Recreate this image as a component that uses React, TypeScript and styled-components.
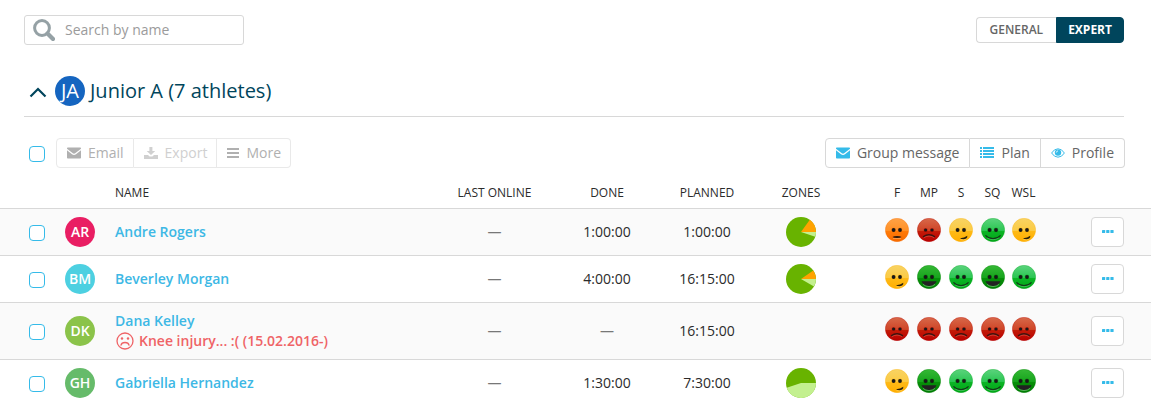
import React from "react";
import styled, { createGlobalStyle, css } from "styled-components";

const color = {
  line: "#d8d8d8",
  accent: "#35bbe9",
  link: "#3db8e5",
  navy: "#00455c",
  text: "#2b2b2b",
  muted: "#666666",
  danger: "#ef6366",
};

const GlobalStyle = createGlobalStyle`
  *, *::before, *::after { box-sizing: border-box; }
  body {
    margin: 0;
    background: #fff;
    color: ${color.text};
    font: 14px/20px "Open Sans", "Noto Sans", sans-serif;
  }
  button, input { font: inherit; color: inherit; margin: 0; }
  svg { display: block; flex: none; }
`;

const Header = styled.header`
  display: flex;
  justify-content: space-between;
  align-items: center;
  padding: 15px 27px 0 24px;
`;

const SearchBox = styled.label`
  display: flex;
  align-items: center;
  gap: 10px;
  width: 220px;
  height: 30px;
  padding: 0 8px;
  border: 1px solid ${color.line};
  border-radius: 3px;
`;

const SearchInput = styled.input`
  flex: 1;
  min-width: 0;
  padding: 0;
  border: 0;
  outline: 0;
  background: none;
  &::placeholder { color: #9b9b9b; opacity: 1; }
`;

const Segments = styled.div`
  display: flex;
`;

const Segment = styled.button<{ $active?: boolean }>`
  height: 26px;
  padding: 0 13px;
  border: 1px solid ${color.line};
  border-radius: 4px 0 0 4px;
  border-right: 0;
  background: #fff;
  color: ${color.muted};
  font-size: 12px;
  font-weight: 600;
  line-height: 16px;
  ${(p) =>
    p.$active &&
    css`
      padding: 0 11px;
      border: 1px solid ${color.navy};
      border-radius: 0 4px 4px 0;
      background: ${color.navy};
      color: #fff;
      font-weight: 700;
    `}
`;

const GroupHeading = styled.div`
  display: flex;
  align-items: center;
  margin: 31px 27px 0 24px;
  padding: 0 0 10px 5px;
  border-bottom: 1px solid ${color.line};
`;

const CollapseButton = styled.button`
  display: flex;
  padding: 2px 0 0;
  border: 0;
  background: none;
  margin-right: 8px;
`;

const Title = styled.h1`
  margin: 0 0 0 5px;
  color: ${color.navy};
  font-size: 20px;
  font-weight: 400;
  line-height: 28px;
`;

const Avatar = styled.span<{ $bg: string; $large?: boolean }>`
  display: flex;
  align-items: center;
  justify-content: center;
  width: 30px;
  height: 30px;
  overflow: hidden;
  border-radius: 50%;
  background: ${(p) => p.$bg};
  color: #fff;
  font-size: ${(p) => (p.$large ? 20 : 14)}px;
  font-weight: ${(p) => (p.$large ? 400 : 600)};
`;

const Toolbar = styled.div`
  display: flex;
  align-items: center;
  padding: 21px 26px 0 29px;
`;

const Checkbox = styled.input.attrs({ type: "checkbox" })`
  display: block;
  appearance: none;
  flex: none;
  width: 16px;
  height: 16px;
  margin-top: 2px;
  border: 1px solid ${color.accent};
  border-radius: 4px;
  background: #fff;
  &:checked { background: ${color.accent}; }
`;

const ToolButton = styled.button<{ $faint?: boolean }>`
  display: flex;
  align-items: center;
  gap: 7px;
  height: 30px;
  padding: 0 10px;
  border: 1px solid var(--edge);
  background: #fff;
  & + & { border-left: 0; }
  &:first-child { border-radius: 4px 0 0 4px; }
  &:last-child { border-radius: 0 4px 4px 0; }
  &:disabled { padding-right: 9px; }
  ${(p) => p.$faint && css`color: #d0d0d0;`}
`;

const ButtonGroup = styled.div<{ $disabled?: boolean }>`
  display: flex;
  color: ${(p) => (p.$disabled ? "#b0b0b0" : color.muted)};
  --edge: ${(p) => (p.$disabled ? "#e9e9e9" : color.line)};
  margin-left: ${(p) => (p.$disabled ? "11px" : "auto")};
`;

const Table = styled.table`
  width: 100%;
  table-layout: fixed;
  border-collapse: separate;
  border-spacing: 0;
`;

const HeadCell = styled.th<{ $w?: number; $left?: boolean; $indent?: boolean }>`
  width: ${(p) => (p.$w ? p.$w + "px" : "auto")};
  height: 41px;
  padding: 15px 0 5px;
  border-bottom: 1px solid ${color.line};
  font-size: 12px;
  font-weight: 400;
  text-align: center;
  white-space: nowrap;
  ${(p) => p.$left && css`padding-left: 15px; text-align: left;`}
  ${(p) => p.$indent && css`padding-left: 26px;`}
`;

const Row = styled.tr`
  &:nth-child(odd) { background: #fafafa; }
`;

const Cell = styled.td<{ $left?: number; $center?: boolean }>`
  padding: 8px 0 8px ${(p) => p.$left ?? 0}px;
  border-bottom: 1px solid ${color.line};
  vertical-align: middle;
  ${(p) => p.$center && css`text-align: center;`}
  svg { margin: 0 auto; }
  ${Row}:last-child & { padding-bottom: 7px; border-bottom: 0; }
`;

const MoodCell = styled(Cell)`
  svg { margin-bottom: 4px; }
`;

const ActionCell = styled(Cell)`
  padding-right: 27px;
  button { margin-left: auto; }
`;

const Dash = styled.span`
  color: #777;
`;

const NameLink = styled.a`
  color: ${color.link};
  font-weight: 600;
  text-decoration: none;
`;

const Note = styled.div`
  display: flex;
  align-items: center;
  gap: 5px;
  color: ${color.danger};
  font-weight: 600;
  svg { margin: 0 0 0 1px; }
`;

const MoreButton = styled.button`
  display: flex;
  align-items: center;
  justify-content: center;
  width: 33px;
  height: 30px;
  padding: 0 0 2px;
  border: 1px solid ${color.line};
  border-radius: 4px;
  background: #fff;
`;

const SearchIcon = () => (
  <svg width="22" height="22" viewBox="0 0 22 22" fill="none" stroke="#95a1a5" aria-hidden="true">
    <circle cx="9" cy="9" r="7.4" strokeWidth="3" />
    <path d="M14.5 14.5 20 20" strokeWidth="4.2" strokeLinecap="round" />
  </svg>
);

const ChevronIcon = () => (
  <svg width="18" height="12" viewBox="0 0 18 12" fill="none" stroke={color.navy} strokeWidth="2.2" aria-hidden="true">
    <path d="M1.5 10.5 9 3l7.5 7.5" />
  </svg>
);

const MailIcon = ({ fill = "currentColor" }: { fill?: string }) => (
  <svg width="14" height="12" viewBox="0 0 14 12" fill={fill} aria-hidden="true">
    <path d="M0 1.2Q0 .5.8.5h12.4q.8 0 .8.7v.6L8.2 6.3Q7 7.1 5.8 6.3L0 1.8z" />
    <path d="M0 3.3 5 7.3q2 1.4 4 0l5-4v7.4q0 .8-.8.8H.8q-.8 0-.8-.8z" />
  </svg>
);

const DownloadIcon = () => (
  <svg width="14" height="13" viewBox="0 0 14 13" fill="currentColor" aria-hidden="true">
    <path d="M5.4 0h3v4h2.8L7 8 2.7 4h2.7z" />
    <path d="M0 8h4l1.6 1.5h2.8L10 8h4v4H0z" />
  </svg>
);

const MenuIcon = () => (
  <svg width="12" height="12" viewBox="0 0 12 12" fill="currentColor" aria-hidden="true">
    <path d="M0 1h12v2H0zM0 5h12v2H0zM0 9h12v2H0z" />
  </svg>
);

const ListIcon = () => (
  <svg width="14" height="12" viewBox="0 0 14 12" fill={color.accent} aria-hidden="true">
    <path d="M0 0h2v2H0zM3 0h11v2H3zM0 3h2v2H0zM3 3h11v2H3zM0 6h2v2H0zM3 6h11v2H3zM0 9h2v2H0zM3 9h11v2H3z" />
  </svg>
);

const EyeIcon = () => (
  <svg width="14" height="10" viewBox="0 0 14 10" fill="none" stroke={color.accent} aria-hidden="true">
    <path d="M.6 5Q3.2.8 7 .8T13.4 5Q10.8 9.2 7 9.2T.6 5z" strokeWidth="1" />
    <circle cx="7" cy="4.6" r="3.2" fill={color.accent} stroke="none" />
    <path d="M5.3 4.6Q5.4 3 7 2.9" stroke="#fff" strokeWidth=".8" />
  </svg>
);

const DotsIcon = () => (
  <svg width="12" height="3" viewBox="0 0 12 3" fill={color.accent} aria-hidden="true">
    <rect width="3.2" height="3" rx=".6" />
    <rect x="4.2" width="3.2" height="3" rx=".6" />
    <rect x="8.4" width="3.2" height="3" rx=".6" />
  </svg>
);

const SickIcon = () => (
  <svg width="18" height="18" viewBox="0 0 18 18" fill="none" stroke={color.danger} strokeWidth="1.3" aria-hidden="true">
    <circle cx="9" cy="9" r="8" />
    <path d="M5 13.2Q5.6 10.5 9 10.5t4 2.7" strokeLinecap="round" />
    <circle cx="6" cy="6.5" r="1.2" fill={color.danger} stroke="none" />
    <circle cx="12" cy="6.5" r="1.2" fill={color.danger} stroke="none" />
  </svg>
);

type Slice = [from: number, to: number, fill: string];

const point = (deg: number) => {
  const a = (deg * Math.PI) / 180;
  return `${15 + 15 * Math.cos(a)} ${15 + 15 * Math.sin(a)}`;
};

const Pie = ({ slices }: { slices: Slice[] }) => (
  <svg width="30" height="30" viewBox="0 0 30 30" role="img" aria-label="Zones">
    <circle cx="15" cy="15" r="15" fill="#68b300" />
    {slices.map(([from, to, fill]) => (
      <path key={fill} fill={fill} d={`M15 15L${point(from)}A15 15 0 0 1 ${point(to)}z`} />
    ))}
  </svg>
);

type Mood = "great" | "good" | "unsure" | "flat" | "bad";

const moodStops: Record<Mood, [string, string, string, string]> = {
  great: ["#35b835", "#17a51d", "#079009", "#007c04"],
  good: ["#5bd37d", "#2cc653", "#0cb526", "#00a516"],
  unsure: ["#f8d363", "#fbcb45", "#feba17", "#ffae00"],
  flat: ["#ffa246", "#ff9127", "#ff7b08", "#f76b00"],
  bad: ["#d8694a", "#cf4527", "#c31b08", "#b80000"],
};

const mouths: Record<Mood, React.ReactNode> = {
  great: (
    <>
      <path d="M4.5 16.2h15Q17.5 21 12 21T4.5 16.2z" fill="#222" />
      <path d="M6 19.4Q8.5 21.6 12 21.6t6-2.2" fill="none" stroke="#8fce8f" strokeWidth=".6" />
    </>
  ),
  good: (
    <g fill="none" strokeLinecap="round">
      <path d="M4.8 17.6Q7.5 20.6 12 20.6t7.2-3" stroke="#123b18" strokeWidth="1.2" />
      <path d="M6.5 20.2Q9 21.7 12 21.7t5.5-1.5" stroke="#7bdc90" strokeWidth=".5" />
    </g>
  ),
  unsure: (
    <>
      <path d="M11 20.3Q15.5 19.8 18.3 17.8q.2 3.2-3.6 3.5-2.2.1-3.7-1z" fill="#28200c" />
      <path d="M11.5 21.6q3.5 1 6-.7" fill="none" stroke="#ffe08a" strokeWidth=".5" />
    </>
  ),
  flat: (
    <>
      <path d="M7.5 18.9q1-1 4.5-1t4.5 1q-.8 1-4.5 1t-4.5-1z" fill="#2b1a0d" />
      <path d="M8 20.5h8" stroke="#ffc184" strokeWidth=".5" />
    </>
  ),
  bad: (
    <g fill="none" strokeLinecap="round">
      <path d="M6.5 18.6Q9 16.8 12 16.8t5.5 1.8" stroke="#3c1510" strokeWidth="1.4" />
      <path d="M7 19.6Q9 18.1 12 18.1t5 1.5" stroke="#e06a5c" strokeWidth=".5" />
    </g>
  ),
};

const Face = ({ mood }: { mood: Mood }) => {
  const id = React.useId();
  const [a, b, c, d] = moodStops[mood];
  const eye = mood === "bad" ? 1.6 : 1.9;
  return (
    <svg width="24" height="24" viewBox="0 0 24 24" role="img" aria-label={mood}>
      <linearGradient id={id} x1="0" y1="0" x2="0" y2="1">
        <stop offset="0" stopColor={a} />
        <stop offset=".52" stopColor={b} />
        <stop offset=".55" stopColor={c} />
        <stop offset="1" stopColor={d} />
      </linearGradient>
      <circle cx="12" cy="12" r="11.7" fill={`url(#${id})`} stroke={d} strokeOpacity=".5" strokeWidth=".6" />
      <circle cx="8.6" cy="12" r={eye + 0.5} fill={d} opacity=".55" />
      <circle cx="15" cy="12" r={eye + 0.5} fill={d} opacity=".55" />
      <circle cx="8.6" cy="12" r={eye} fill="#181818" />
      <circle cx="15" cy="12" r={eye} fill="#181818" />
      {mouths[mood]}
    </svg>
  );
};

interface Athlete {
  initials: string;
  bg: string;
  name: string;
  note?: string;
  done?: string;
  planned: string;
  zones?: Slice[];
  moods: Mood[];
}

const ORANGE = "#ffa200";
const LIME = "#c3f08f";

const athletes: Athlete[] = [
  {
    initials: "AR", bg: "#e91e63", name: "Andre Rogers", done: "1:00:00", planned: "1:00:00",
    zones: [[-54, 0, ORANGE], [0, 18, LIME]],
    moods: ["flat", "bad", "unsure", "good", "unsure"],
  },
  {
    initials: "BM", bg: "#4dd0e1", name: "Beverley Morgan", done: "4:00:00", planned: "16:15:00",
    zones: [[-35, 0, ORANGE], [0, 30, LIME]],
    moods: ["unsure", "great", "good", "great", "good"],
  },
  {
    initials: "DK", bg: "#8bc34a", name: "Dana Kelley", note: "Knee injury... :( (15.02.2016-)", planned: "16:15:00",
    moods: ["bad", "bad", "bad", "bad", "bad"],
  },
  {
    initials: "GH", bg: "#66bb6a", name: "Gabriella Hernandez", done: "1:30:00", planned: "7:30:00",
    zones: [[0, 162, LIME]],
    moods: ["unsure", "great", "good", "good", "great"],
  },
];

const AthleteRow = ({ athlete }: { athlete: Athlete }) => (
  <Row>
    <Cell $left={29}>
      <Checkbox aria-label={`Select ${athlete.name}`} />
    </Cell>
    <Cell $left={5}>
      <Avatar $bg={athlete.bg}>{athlete.initials}</Avatar>
    </Cell>
    <Cell $left={15}>
      <NameLink href="#">{athlete.name}</NameLink>
      {athlete.note && (
        <Note>
          <SickIcon />
          {athlete.note}
        </Note>
      )}
    </Cell>
    <Cell $center><Dash>—</Dash></Cell>
    <Cell $center>{athlete.done ?? <Dash>—</Dash>}</Cell>
    <Cell $center>{athlete.planned}</Cell>
    <Cell>{athlete.zones && <Pie slices={athlete.zones} />}</Cell>
    {athlete.moods.map((mood, i) => (
      <MoodCell key={i} $left={i === 0 ? 26 : 0}>
        <Face mood={mood} />
      </MoodCell>
    ))}
    <ActionCell>
      <MoreButton aria-label={`Actions for ${athlete.name}`}>
        <DotsIcon />
      </MoreButton>
    </ActionCell>
  </Row>
);

export default function App() {
  return (
    <main>
      <GlobalStyle />
      <Header>
        <SearchBox>
          <SearchIcon />
          <SearchInput type="text" placeholder="Search by name" aria-label="Search by name" />
        </SearchBox>
        <Segments>
          <Segment>GENERAL</Segment>
          <Segment $active>EXPERT</Segment>
        </Segments>
      </Header>
      <GroupHeading>
        <CollapseButton aria-label="Collapse group">
          <ChevronIcon />
        </CollapseButton>
        <Avatar $bg="#1565c0" $large>JA</Avatar>
        <Title>Junior A (7 athletes)</Title>
      </GroupHeading>
      <Toolbar>
        <Checkbox aria-label="Select all athletes" />
        <ButtonGroup $disabled>
          <ToolButton disabled><MailIcon />Email</ToolButton>
          <ToolButton disabled $faint><DownloadIcon />Export</ToolButton>
          <ToolButton disabled><MenuIcon />More</ToolButton>
        </ButtonGroup>
        <ButtonGroup>
          <ToolButton><MailIcon fill={color.accent} />Group message</ToolButton>
          <ToolButton><ListIcon />Plan</ToolButton>
          <ToolButton><EyeIcon />Profile</ToolButton>
        </ButtonGroup>
      </Toolbar>
      <Table>
        <thead>
          <tr>
            <HeadCell $w={60} />
            <HeadCell $w={40} />
            <HeadCell $left>NAME</HeadCell>
            <HeadCell $w={105}>LAST ONLINE</HeadCell>
            <HeadCell $w={120}>DONE</HeadCell>
            <HeadCell $w={80}>PLANNED</HeadCell>
            <HeadCell $w={108}>ZONES</HeadCell>
            <HeadCell $w={58} $indent>F</HeadCell>
            <HeadCell $w={32}>MP</HeadCell>
            <HeadCell $w={32}>S</HeadCell>
            <HeadCell $w={31}>SQ</HeadCell>
            <HeadCell $w={31}>WSL</HeadCell>
            <HeadCell $w={112} />
          </tr>
        </thead>
        <tbody>
          {athletes.map((athlete) => (
            <AthleteRow key={athlete.name} athlete={athlete} />
          ))}
        </tbody>
      </Table>
    </main>
  );
}
